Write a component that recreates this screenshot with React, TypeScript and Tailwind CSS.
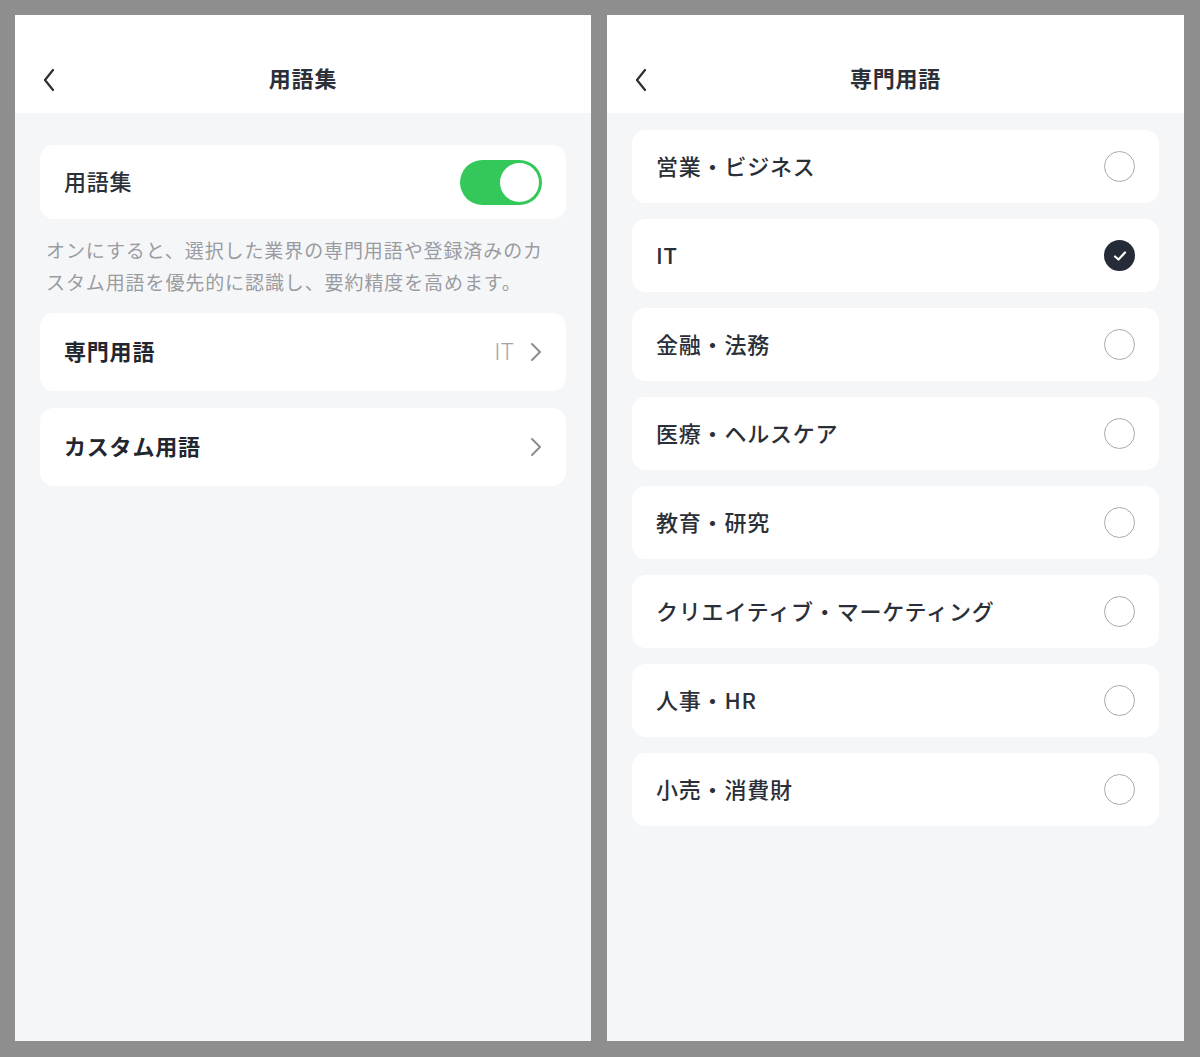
import React from "react";

const font = { fontFamily: '"Noto Sans CJK JP", "Noto Sans", sans-serif' };

function Back() {
  return (
    <svg width="14" height="24" viewBox="0 0 14 24" fill="none">
      <path d="M11 2 L3 12 L11 22" stroke="#2b2f38" strokeWidth="2.2" strokeLinecap="round" strokeLinejoin="round" />
    </svg>
  );
}

function Chevron() {
  return (
    <svg width="12" height="20" viewBox="0 0 12 20" fill="none">
      <path d="M2 2 L10 10 L2 18" stroke="#8a8d93" strokeWidth="2" strokeLinecap="round" strokeLinejoin="round" />
    </svg>
  );
}

function Header({ title }: { title: string }) {
  return (
    <div className="relative h-[98px] bg-white flex items-center justify-center pt-[26px]">
      <div className="absolute left-[27px] top-[53px]">
        <Back />
      </div>
      <div className="text-[22px] tracking-[0.8px] font-bold text-[#2b2f38]">{title}</div>
    </div>
  );
}

const items = [
  "営業・ビジネス",
  "IT",
  "金融・法務",
  "医療・ヘルスケア",
  "教育・研究",
  "クリエイティブ・マーケティング",
  "人事・HR",
  "小売・消費財",
];

export default function App() {
  return (
    <div className="w-[1200px] h-[1057px] bg-[#8e8e8e] flex gap-[16px] pl-[15px] pt-[15px]" style={font}>
      <div className="w-[576px] h-[1026px] bg-[#f5f6f8] flex flex-col">
        <Header title="用語集" />
        <div className="px-[25px] pt-[32px] flex flex-col">
          <div className="h-[74px] bg-white rounded-[14px] flex items-center justify-between pl-[24px] pr-[24px]">
            <span className="text-[22px] tracking-[0.8px] font-medium text-[#2b2f38] pb-[3px]">用語集</span>
            <div className="w-[82px] h-[45px] rounded-full bg-[#34c759] flex items-center justify-end pr-[3px]">
              <div className="w-[39px] h-[39px] rounded-full bg-white" />
            </div>
          </div>
          <p className="text-[19px] tracking-[0.9px] leading-[32px] text-[#9a9ca1] px-[6px] pt-[15px] pb-[15px]">
            オンにすると、選択した業界の専門用語や登録済みのカスタム用語を優先的に認識し、要約精度を高めます。
          </p>
          <div className="h-[78px] bg-white rounded-[14px] flex items-center justify-between pl-[24px] pr-[24px]">
            <span className="text-[22px] tracking-[0.8px] font-bold text-[#23262e] pb-[3px]">専門用語</span>
            <div className="flex items-center gap-[16px]">
              <span className="text-[23px] font-light text-[#a3a5aa] pb-[3px]">IT</span>
              <Chevron />
            </div>
          </div>
          <div className="h-[78px] mt-[17px] bg-white rounded-[14px] flex items-center justify-between pl-[24px] pr-[24px]">
            <span className="text-[22px] tracking-[0.8px] font-bold text-[#23262e] pb-[3px]">カスタム用語</span>
            <Chevron />
          </div>
        </div>
      </div>
      <div className="w-[577px] h-[1026px] bg-[#f5f6f8] flex flex-col">
        <Header title="専門用語" />
        <div className="px-[25px] pt-[17px] flex flex-col gap-[16px]">
          {items.map((it) => (
            <div key={it} className="h-[73px] bg-white rounded-[14px] flex items-center justify-between pl-[24px] pr-[24px]">
              <span className="text-[22px] tracking-[0.8px] font-medium text-[#2b2f38] pb-[3px]">{it}</span>
              {it === "IT" ? (
                <div className="w-[31px] h-[31px] rounded-full bg-[#262b38] flex items-center justify-center">
                  <svg width="16" height="16" viewBox="0 0 16 16" fill="none">
                    <path d="M3 8.5 L6.5 11.5 L13 4.5" stroke="white" strokeWidth="2.2" strokeLinecap="round" strokeLinejoin="round" />
                  </svg>
                </div>
              ) : (
                <div className="w-[31px] h-[31px] rounded-full border-[1.5px] border-[#a8aaae]" />
              )}
            </div>
          ))}
        </div>
      </div>
    </div>
  );
}
